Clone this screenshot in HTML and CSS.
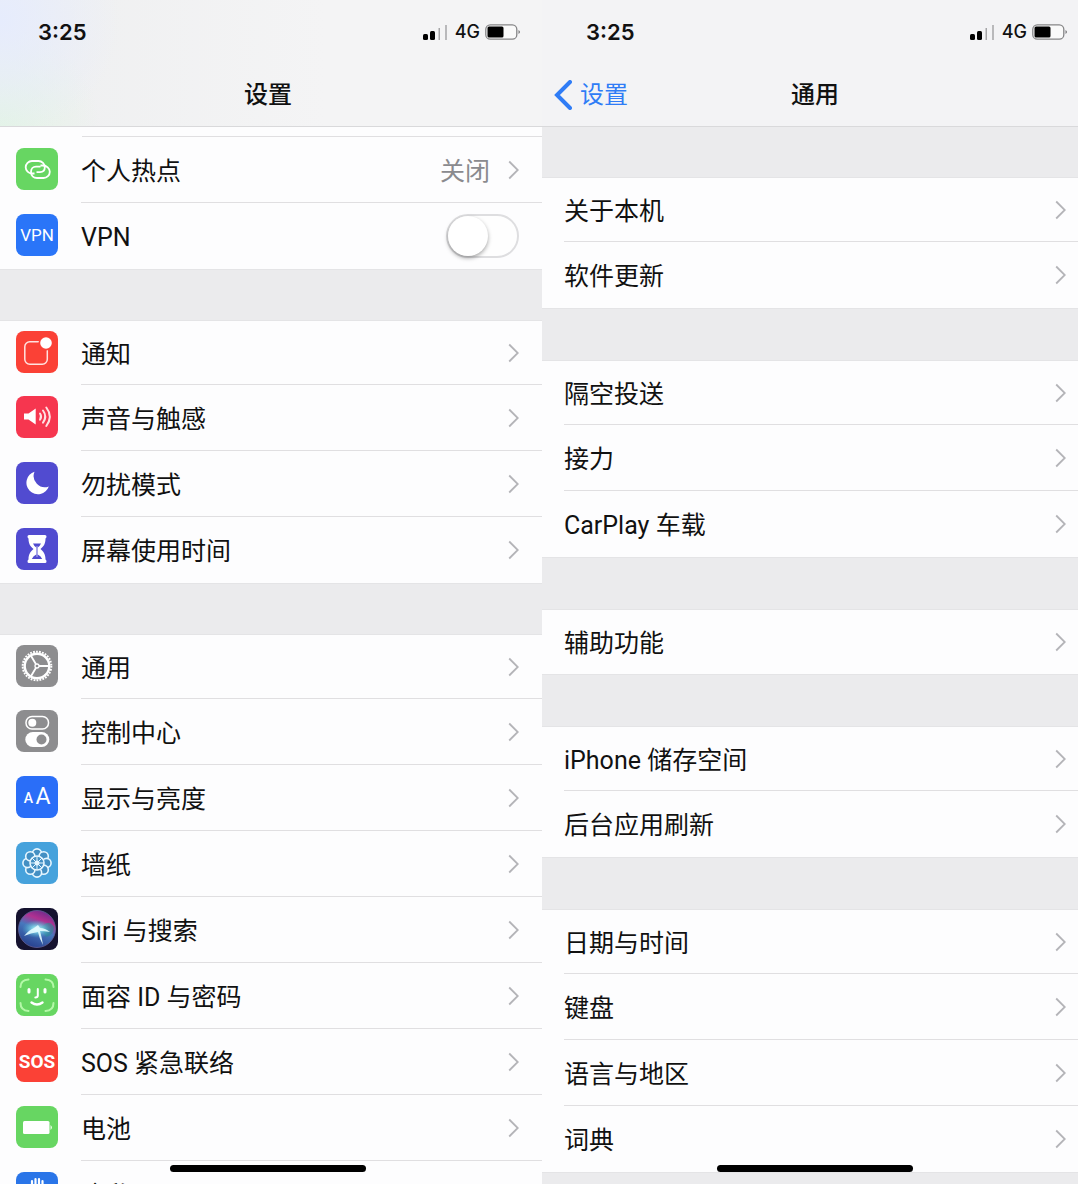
FILE: index.html
```html
<!DOCTYPE html>
<html lang="zh-CN">
<head>
    <meta charset="UTF-8">
    <meta name="viewport" content="width=device-width, initial-scale=1.0">
    <title>设置</title>
    <link rel="stylesheet" href="styles.css">
</head>
<body>
    <svg class="sprite" aria-hidden="true">
        <symbol id="chevron" viewBox="0 0 11 20">
            <path d="M1.2 1.5 9.8 10 1.2 18.5" fill="none" stroke="currentColor" stroke-width="1.8"/>
        </symbol>
        <symbol id="signal" viewBox="0 0 25 16">
            <rect x="0" y="10" width="5" height="6" rx="1.5"/>
            <rect x="7" y="7" width="5" height="9" rx="1.5"/>
            <rect x="15.5" y="4" width="1.5" height="12" fill="#a5a5a7"/>
            <rect x="22" y="1" width="2" height="15" fill="#b9b9bb"/>
        </symbol>
        <symbol id="battery" viewBox="0 0 36 16">
            <rect x=".8" y=".8" width="31" height="14.4" rx="4.5" fill="#fafafa" stroke="#858587" stroke-width="1.3"/>
            <rect x="2.5" y="2.5" width="16" height="11" rx="1.5"/>
            <path d="M33.5 6q3 2 0 4z" fill="#77777a"/>
        </symbol>
    </svg>

    <main class="screens">
        <section class="screen screen-settings">
            <header class="top">
                <div class="status">
                    <span class="time">3:25</span>
                    <svg class="signal"><use href="#signal"/></svg>
                    <span class="network">4G</span>
                    <svg class="battery"><use href="#battery"/></svg>
                </div>
                <div class="nav">
                    <h1>设置</h1>
                </div>
            </header>

            <ul class="group group-first">
                <li class="row-cut"></li>
                <li>
                    <a class="row" href="#hotspot">
                        <svg class="icon" viewBox="0 0 42 42">
                            <rect width="42" height="42" rx="8" fill="#67d662"/>
                            <g fill="none" stroke="#fff" stroke-width="1.8">
                                <path d="M18.5 25.5H16c-3.5 0-6.300-2.800-6.300-6.200S12.500 13 16 13h6.500c3.500 0 6.300 2.800 6.300 6.200 0 3-2.300 4.800-4.800 5h-3.500"/>
                                <path d="M24.500 17.500H27c3.500 0 6.800 2.800 6.800 6.300S31 30 27.500 30H21c-3.500 0-6-2.500-6-6 0-3 2-5.300 5-5.300h4.500"/>
                            </g>
                        </svg>
                        <span class="body">个人热点 <span class="value">关闭</span><svg class="chevron"><use href="#chevron"/></svg></span>
                    </a>
                </li>
                <li>
                    <label class="row">
                        <svg class="icon" viewBox="0 0 42 42">
                            <rect width="42" height="42" rx="8" fill="#2a75f8"/>
                            <text class="icon-vpn" x="21" y="27">VPN</text>
                        </svg>
                        <span class="body">VPN <input class="switch" type="checkbox"></span>
                    </label>
                </li>
            </ul>

            <ul class="group">
                <li>
                    <a class="row" href="#notifications">
                        <svg class="icon" viewBox="0 0 42 42">
                            <rect width="42" height="42" rx="8" fill="#fb4136"/>
                            <rect x="8.8" y="10.8" width="22.5" height="22.5" rx="5" fill="none" stroke="#ffe3df" stroke-width="1.5"/>
                            <circle cx="30" cy="12" r="7.5" fill="#fb4136"/>
                            <circle cx="30" cy="12" r="5.8" fill="#fff"/>
                        </svg>
                        <span class="body">通知<svg class="chevron"><use href="#chevron"/></svg></span>
                    </a>
                </li>
                <li>
                    <a class="row" href="#sounds">
                        <svg class="icon" viewBox="0 0 42 42">
                            <rect width="42" height="42" rx="8" fill="#f6364f"/>
                            <path d="M8 17.500h4.500l7.200-5v16l-7.200-5H8z" fill="#fff"/>
                            <g fill="none" stroke="#ffe0e2" stroke-width="2" stroke-linecap="round">
                                <path d="M24 17.500q2.200 3 0 6.200"/>
                                <path d="M27 14.500q4.500 6 0 12.200"/>
                                <path d="M30.300 11.500q7 9 0 18.500"/>
                            </g>
                        </svg>
                        <span class="body">声音与触感<svg class="chevron"><use href="#chevron"/></svg></span>
                    </a>
                </li>
                <li>
                    <a class="row" href="#dnd">
                        <svg class="icon" viewBox="0 0 42 42">
                            <rect width="42" height="42" rx="8" fill="#514bd0"/>
                            <path d="M18.500 9.800A11.500 11.500 0 1 0 32.800 24.500 11.200 11.200 0 0 1 18.500 9.800z" fill="#fff"/>
                        </svg>
                        <span class="body">勿扰模式<svg class="chevron"><use href="#chevron"/></svg></span>
                    </a>
                </li>
                <li>
                    <a class="row" href="#screentime">
                        <svg class="icon" viewBox="0 0 42 42">
                            <rect width="42" height="42" rx="8" fill="#514bd0"/>
                            <path d="M13 7h16q1.500 0 1.500 1.500T29.500 10.500c0 5.500-2 8-5 10.500 3 2.500 5 5 5 10.500q1 .5 1 2T29 35H13q-1.500 0-1.500-1.500t1-2c0-5.500 2-8 5-10.500-3-2.500-5-5-5-10.500q-1-.5-1-2T13 7z" fill="#fff"/>
                            <path d="M17 15.500h8q-1 2.500-3.300 4v7q3 1 4.500 4.500H15.800q1.500-3.500 4.500-4.500v-7Q18 18 17 15.500z" fill="#514bd0"/>
                            <path d="M21 18v11" stroke="#fff" stroke-width=".6"/>
                        </svg>
                        <span class="body">屏幕使用时间<svg class="chevron"><use href="#chevron"/></svg></span>
                    </a>
                </li>
            </ul>

            <ul class="group">
                <li>
                    <a class="row" href="#general">
                        <svg class="icon" viewBox="0 0 42 42">
                            <rect width="42" height="42" rx="8" fill="#8d8d8f"/>
                            <g fill="none" stroke="#fff">
                                <circle cx="21" cy="21" r="14.300" stroke-width="2" stroke-dasharray="1.800 1.200"/>
                                <circle cx="21" cy="21" r="12.300" stroke-width="2.400"/>
                                <path d="M23 21h11M20 19.300 14.500 10M20 22.700 14.500 32" stroke-width="1.800"/>
                                <circle cx="21" cy="21" r="2" stroke-width="1.300"/>
                            </g>
                        </svg>
                        <span class="body">通用<svg class="chevron"><use href="#chevron"/></svg></span>
                    </a>
                </li>
                <li>
                    <a class="row" href="#control">
                        <svg class="icon" viewBox="0 0 42 42">
                            <rect width="42" height="42" rx="8" fill="#8d8d8f"/>
                            <rect x="10" y="6.500" width="22.500" height="12.500" rx="6" fill="none" stroke="#fff" stroke-width="1.500"/>
                            <circle cx="16.300" cy="12.700" r="4" fill="#fff"/>
                            <rect x="9.300" y="22" width="24" height="15" rx="7.500" fill="#fff"/>
                            <circle cx="25.500" cy="29.500" r="5" fill="#8d8d8f"/>
                        </svg>
                        <span class="body">控制中心<svg class="chevron"><use href="#chevron"/></svg></span>
                    </a>
                </li>
                <li>
                    <a class="row" href="#display">
                        <svg class="icon" viewBox="0 0 42 42">
                            <rect width="42" height="42" rx="8" fill="#2a6ef8"/>
                            <text class="icon-small-a" x="12.500" y="27">A</text>
                            <text class="icon-big-a" x="27" y="28">A</text>
                        </svg>
                        <span class="body">显示与亮度<svg class="chevron"><use href="#chevron"/></svg></span>
                    </a>
                </li>
                <li>
                    <a class="row" href="#wallpaper">
                        <svg class="icon" viewBox="0 0 42 42">
                            <rect width="42" height="42" rx="8" fill="#46a2dc"/>
                            <g fill="#438fc3" stroke="#e6f6ff" stroke-width="1.600">
                                <circle cx="21" cy="11.500" r="4.600"/>
                                <circle cx="27.700" cy="14.300" r="4.600"/>
                                <circle cx="30.500" cy="21" r="4.600"/>
                                <circle cx="27.700" cy="27.700" r="4.600"/>
                                <circle cx="21" cy="30.500" r="4.600"/>
                                <circle cx="14.300" cy="27.700" r="4.600"/>
                                <circle cx="11.500" cy="21" r="4.600"/>
                                <circle cx="14.300" cy="14.300" r="4.600"/>
                                <circle cx="21" cy="21" r="7"/>
                                <path d="M21 14v14M14 21h14M16 16l10 10M26 16 16 26" stroke-width="1"/>
                            </g>
                            <circle cx="21" cy="21" r="2.500" fill="#e6f6ff"/>
                        </svg>
                        <span class="body">墙纸<svg class="chevron"><use href="#chevron"/></svg></span>
                    </a>
                </li>
                <li>
                    <a class="row" href="#siri">
                        <svg class="icon" viewBox="0 0 42 42">
                            <defs>
                                <linearGradient id="orb" x1=".7" y1="0" x2=".3" y2="1">
                                    <stop offset="0" stop-color="#6b2a8c"/>
                                    <stop offset=".25" stop-color="#b03191"/>
                                    <stop offset=".5" stop-color="#4778bd"/>
                                    <stop offset="1" stop-color="#263e8c"/>
                                </linearGradient>
                                <radialGradient id="glow">
                                    <stop offset="0" stop-color="#fff"/>
                                    <stop offset=".3" stop-color="#92eaf0" stop-opacity=".8"/>
                                    <stop offset="1" stop-color="#46b7d0" stop-opacity="0"/>
                                </radialGradient>
                            </defs>
                            <rect width="42" height="42" rx="8" fill="#15122f"/>
                            <circle cx="21" cy="21" r="18.500" fill="url(#orb)" stroke="#62609b" stroke-width=".8"/>
                            <path d="M25 20Q33 10 38 19q0 8-8 10z" fill="#2b8b94" opacity=".6"/>
                            <ellipse cx="21" cy="21" rx="15" ry="9" fill="url(#glow)"/>
                            <path d="M8 28q5-6 10-8l4-3 2 3q5 0 10 4-6-1-10-1 2 7 3 14-4-7-5-13-7 1-14 4z" fill="#e3fcff" opacity=".9"/>
                        </svg>
                        <span class="body">Siri 与搜索<svg class="chevron"><use href="#chevron"/></svg></span>
                    </a>
                </li>
                <li>
                    <a class="row" href="#faceid">
                        <svg class="icon" viewBox="0 0 42 42">
                            <rect width="42" height="42" rx="8" fill="#67d662"/>
                            <g fill="none" stroke-linecap="round">
                                <path d="M4.500 13q0-7 8-7.500M29.500 5.500q8 .5 8 7.500M37.500 29q0 7.500-8 8M12.500 37q-8-.5-8-8" stroke="#b4f8a8" stroke-width="2"/>
                                <path d="M13 15.500v2.500M29 15.500v2.500" stroke="#fff" stroke-width="3"/>
                                <path d="M21.800 15v6.500q0 2-2.500 2" stroke="#fff" stroke-width="2"/>
                                <path d="M15.500 28.500q5.500 4 11 0" stroke="#fff" stroke-width="2.400"/>
                            </g>
                        </svg>
                        <span class="body">面容 ID 与密码<svg class="chevron"><use href="#chevron"/></svg></span>
                    </a>
                </li>
                <li>
                    <a class="row" href="#sos">
                        <svg class="icon" viewBox="0 0 42 42">
                            <rect width="42" height="42" rx="8" fill="#fb4136"/>
                            <text class="icon-sos" x="21" y="28">SOS</text>
                        </svg>
                        <span class="body">SOS 紧急联络<svg class="chevron"><use href="#chevron"/></svg></span>
                    </a>
                </li>
                <li>
                    <a class="row" href="#battery-usage">
                        <svg class="icon" viewBox="0 0 42 42">
                            <rect width="42" height="42" rx="8" fill="#67d662"/>
                            <rect x="7" y="15" width="26.500" height="13" rx="1.500" fill="#fff"/>
                            <path d="M34.500 19q3 2.500 0 5z" fill="#e8ffe5"/>
                        </svg>
                        <span class="body">电池<svg class="chevron"><use href="#chevron"/></svg></span>
                    </a>
                </li>
                <li>
                    <a class="row" href="#privacy">
                        <svg class="icon" viewBox="0 0 42 42">
                            <rect width="42" height="42" rx="8" fill="#2a75e8"/>
                            <path d="M12.500 13v8M16 9v12M19.500 7v14M23 7v14M26.500 9v13" fill="none" stroke="#fff" stroke-width="2.200" stroke-linecap="round"/>
                            <path d="M11.400 20h16.200v3l4-3 1 1-6 11q-6 4-12 0-3-4-3.200-12z" fill="#fff"/>
                        </svg>
                        <span class="body">隐私<svg class="chevron"><use href="#chevron"/></svg></span>
                    </a>
                </li>
            </ul>
            <div class="home-bar"></div>
        </section>

        <section class="screen screen-general">
            <header class="top">
                <div class="status">
                    <span class="time">3:25</span>
                    <svg class="signal"><use href="#signal"/></svg>
                    <span class="network">4G</span>
                    <svg class="battery"><use href="#battery"/></svg>
                </div>
                <div class="nav">
                    <a class="back" href="#settings">
                        <svg viewBox="0 0 18 30"><path d="M16 2 3 15l13 13" fill="none" stroke="currentColor" stroke-width="4" stroke-linecap="round"/></svg>
                        设置
                    </a>
                    <h1>通用</h1>
                </div>
            </header>

            <ul class="group">
                <li><a class="row" href="#about"><span class="body">关于本机<svg class="chevron"><use href="#chevron"/></svg></span></a></li>
                <li><a class="row" href="#update"><span class="body">软件更新<svg class="chevron"><use href="#chevron"/></svg></span></a></li>
            </ul>

            <ul class="group">
                <li><a class="row" href="#airdrop"><span class="body">隔空投送<svg class="chevron"><use href="#chevron"/></svg></span></a></li>
                <li><a class="row" href="#handoff"><span class="body">接力<svg class="chevron"><use href="#chevron"/></svg></span></a></li>
                <li><a class="row" href="#carplay"><span class="body">CarPlay 车载<svg class="chevron"><use href="#chevron"/></svg></span></a></li>
            </ul>

            <ul class="group">
                <li><a class="row" href="#accessibility"><span class="body">辅助功能<svg class="chevron"><use href="#chevron"/></svg></span></a></li>
            </ul>

            <ul class="group">
                <li><a class="row" href="#storage"><span class="body">iPhone 储存空间<svg class="chevron"><use href="#chevron"/></svg></span></a></li>
                <li><a class="row" href="#refresh"><span class="body">后台应用刷新<svg class="chevron"><use href="#chevron"/></svg></span></a></li>
            </ul>

            <ul class="group">
                <li><a class="row" href="#date"><span class="body">日期与时间<svg class="chevron"><use href="#chevron"/></svg></span></a></li>
                <li><a class="row" href="#keyboard"><span class="body">键盘<svg class="chevron"><use href="#chevron"/></svg></span></a></li>
                <li><a class="row" href="#language"><span class="body">语言与地区<svg class="chevron"><use href="#chevron"/></svg></span></a></li>
                <li><a class="row" href="#dictionary"><span class="body">词典<svg class="chevron"><use href="#chevron"/></svg></span></a></li>
            </ul>
            <div class="home-bar"></div>
        </section>
    </main>
</body>
</html>
```

FILE: styles.css
```css
:root {
    --page: #ebebed;
    --card: #fdfdfe;
    --line: #e0dfe1;
    --text: #111;
    --muted: #8a8a8e;
    --blue: #2f7cf6;
}

* {
    box-sizing: border-box;
    margin: 0;
    padding: 0;
}

body {
    font-family: Roboto, "Noto Sans CJK SC", sans-serif;
    font-size: 25px;
    line-height: 30px;
    color: var(--text);
    background: var(--page);
}

a {
    color: inherit;
    text-decoration: none;
}

ul {
    list-style: none;
}

.sprite {
    position: absolute;
    width: 0;
    height: 0;
}

.screens {
    display: flex;
    height: 100vh;
    overflow: hidden;
}

.screen {
    position: relative;
    height: 100vh;
    overflow: hidden;
    background: var(--page);
}

.screen-settings {
    --gap: 52px;
    --edge: 23px;
    --inset-left: 0px;
    --inset-right: 6px;
    flex: 542;
}

.screen-general {
    --gap: 53px;
    --edge: 12px;
    --inset-left: 10px;
    --inset-right: 0px;
    flex: 536;
}

/* header */
.top {
    height: 127px;
    border-bottom: 1px solid #d9d9db;
    background: #f3f3f5;
}

.screen-settings .top {
    background:
        radial-gradient(circle at 0 20px, #e6ecfd, rgba(230, 236, 253, 0) 120px),
        radial-gradient(circle at 0 127px, #e3f4e5, rgba(227, 244, 229, 0) 100px),
        linear-gradient(to right, #eeeff0, #f4f4f5 60%);
}

.status {
    display: flex;
    align-items: center;
    height: 64px;
    padding: 0 calc(var(--edge) - 2px) 0 calc(var(--inset-left) + 38px);
}

.screen-general .status {
    padding-left: 44px;
}

.time {
    margin-right: auto;
    font-family: Inter, sans-serif;
    font-size: 22px;
    font-weight: 600;
}

.signal {
    width: 25px;
    height: 16px;
}

.network {
    margin: 0 5px 0 7px;
    font-family: Inter, sans-serif;
    font-size: 18px;
    font-weight: 500;
}

.battery {
    width: 36px;
    height: 16px;
}

.nav {
    position: relative;
    display: flex;
    align-items: center;
    justify-content: center;
    height: 62px;
    padding: 0 var(--inset-right) 0 var(--inset-left);
}

.nav h1 {
    font-size: 24px;
    font-weight: 500;
}

.back {
    position: absolute;
    left: 12px;
    display: flex;
    align-items: center;
    gap: 8px;
    font-size: 24px;
    color: var(--blue);
}

.back svg {
    width: 18px;
    height: 30px;
}

/* lists */
.group {
    margin-top: var(--gap);
    background: var(--card);
    box-shadow: 0 0 0 1px #e4e4e6;
}

.screen-general .top + .group {
    margin-top: 51px;
}

.group-first {
    margin-top: 0;
    box-shadow: 0 1px 0 #e4e4e6;
}

.row-cut {
    height: 10px;
    margin-left: 82px;
    border-bottom: 1px solid var(--line);
}

.row {
    display: flex;
    align-items: center;
    height: 66px;
    padding-left: 16px;
}

li:first-child .row {
    height: 64px;
}

.screen-general .row {
    padding-left: 22px;
}

.icon {
    flex: none;
    width: 42px;
    height: 42px;
    margin: 0 23px 2px 0;
}

/* text sits a little below the centre line, controls stay on it */
.body {
    display: flex;
    flex: 1;
    align-items: center;
    align-self: stretch;
    padding: 4px var(--edge) 0 0;
    border-bottom: 1px solid var(--line);
}

li:last-child .body {
    border-bottom-color: transparent;
}

.value {
    margin-left: auto;
    color: var(--muted);
}

.chevron {
    width: 11px;
    height: 20px;
    margin: 0 0 4px auto;
    color: #b4b4b8;
}

.value + .chevron {
    margin-left: 18px;
}

.switch {
    appearance: none;
    width: 73px;
    height: 44px;
    margin: 0 0 4px auto;
    border: 2px solid #dedee0;
    border-radius: 22px;
    background: #fefefe;
}

.switch::before {
    content: '';
    display: block;
    width: 40px;
    height: 40px;
    border-radius: 50%;
    background: white;
    box-shadow: 0 2px 4px rgba(0, 0, 0, 0.35);
}

.switch:checked {
    background: #67d662;
}

.switch:checked::before {
    margin-left: auto;
}

/* lettering inside the icons */
.icon text {
    fill: white;
    text-anchor: middle;
}

.icon-vpn {
    font-size: 17px;
}

.icon-small-a {
    font-size: 14px;
    font-weight: 500;
}

.icon-big-a {
    font-size: 23px;
}

.icon-sos {
    font-size: 19px;
    font-weight: 700;
}

.home-bar {
    position: absolute;
    left: var(--inset-left);
    right: var(--inset-right);
    bottom: 12px;
    width: 196px;
    height: 7px;
    margin: 0 auto;
    border-radius: 4px;
    background: black;
}
```
